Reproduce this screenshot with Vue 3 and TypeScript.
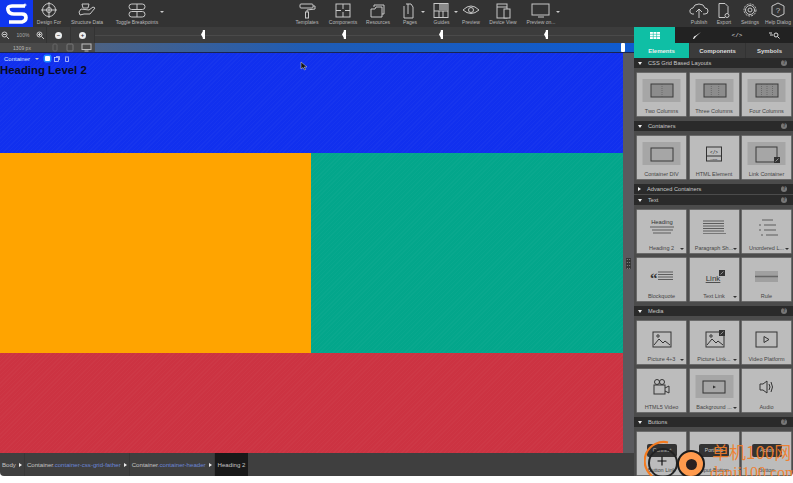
<script setup lang="ts">
interface ToolItem { label: string; width: number; icon: string; caret?: boolean }
interface Card { label: string; icon: string; back?: boolean; caret?: boolean }
interface Section { title: string; open: boolean; cards: Card[] }

const s = 'fill="none" stroke="#c8c8c8" stroke-width="1"'
const k = 'fill="none" stroke="#333" stroke-width="1"'

const leftTools: ToolItem[] = [
  { label: 'Design For', width: 32, icon: `<g ${s}><circle cx="12" cy="8" r="6.5"/><circle cx="12" cy="8" r="2.5"/><path d="M12 0v16M4 8h16"/></g>` },
  { label: 'Structure Data', width: 44, icon: `<g ${s}><path d="M7 2h7l-1 4H8zM6 7l8 1 4-3 2 1-5 6H9l-4 1-1-3z"/></g>` },
  { label: 'Toggle Breakpoints', width: 56, icon: `<g ${s}><rect x="4" y="2" width="16" height="5.5" rx="2.7"/><rect x="4" y="9.5" width="16" height="5.5" rx="2.7"/><path d="M12 2v5.500M12 9.500v5.500"/></g>` }
]
const midTools: ToolItem[] = [
  { label: 'Templates', width: 36, icon: `<g ${s}><rect x="5" y="2" width="13" height="4" rx="1"/><path d="M18 4h2v3l-8 1v2"/><rect x="10.500" y="10" width="3" height="6"/></g>` },
  { label: 'Components', width: 36, icon: `<g ${s}><rect x="5" y="2" width="14" height="13"/><path d="M12 2v5M12 10v5M5 8.500h5M14 8.500h5"/></g>` },
  { label: 'Resources', width: 34, icon: `<g ${s}><path d="M8 5V3h10v9h-2"/><path d="M5 7h4l1-2h6v10H5z"/></g>` },
  { label: 'Pages', width: 30, icon: `<g ${s}><path d="M8 2h5l2 3v11H6V4"/><path d="M10 2v10"/></g>`, caret: true },
  { label: 'Guides', width: 33, icon: `<g ${s}><rect x="4" y="1.500" width="14" height="14"/><path d="M4 9h14M9 9v6.500M13 9v6.500"/><rect x="9" y="2" width="9" height="6.500" fill="#8a8a8a" stroke="none"/></g>`, caret: true },
  { label: 'Preview', width: 26, icon: `<g ${s}><path d="M4 8q8-8 16 0q-8 7-16 0z"/><circle cx="12" cy="8" r="2.500"/></g>` },
  { label: 'Device View', width: 38, icon: `<g ${s}><rect x="6" y="2" width="10" height="14"/><path d="M6 5h10"/><rect x="13" y="7" width="6" height="9" fill="#333"/></g>` },
  { label: 'Preview on...', width: 38, icon: `<g ${s}><rect x="3" y="2" width="17" height="11"/><path d="M9 15h6"/></g>`, caret: true }
]
const rightTools: ToolItem[] = [
  { label: 'Publish', width: 26, icon: `<g ${s}><path d="M7 12H5q-3-1-2-4 1-2 3-2 1-4 6-4 5 0 6 4 3 0 3 3t-3 3h-2"/><path d="M12 16V8M9 10l3-3 3 3"/></g>` },
  { label: 'Export', width: 24, icon: `<g ${s}><path d="M7 1.500h6l3 3v7M13 15.500H7v-14"/><circle cx="15" cy="13.500" r="2"/></g>` },
  { label: 'Settings', width: 28, icon: `<g ${s}><circle cx="12" cy="8" r="6" stroke-dasharray="2 1"/><circle cx="12" cy="8" r="4.500"/><circle cx="12" cy="8" r="2"/></g>` },
  { label: 'Help Dialog', width: 28, icon: `<g ${s}><path d="M12 1l6 3v8l-6 3-6-3V4z"/></g><text x="12" y="11" font-size="8" text-anchor="middle" fill="#c8c8c8" font-family="Liberation Sans">?</text>` }
]

const sliderMarks = [201, 342, 439, 544]

const cols = (n: number) => {
  let lines = ''
  for (let i = 1; i < n; i++) {
    const x = 14 + (22 * i) / n
    lines += `<path d="M${x} 6v13" stroke="#555" stroke-width="0.6" stroke-dasharray="1 1"/>`
  }
  return `<rect x="14" y="6" width="22" height="13" fill="#8c8c8c" stroke="#3a3a3a" stroke-width="1"/>${lines}`
}
const textLines = (x: number, y: number, w: number, n: number, gap: number) => {
  let out = ''
  for (let i = 0; i < n; i++) out += `<path d="M${x} ${y + i * gap}h${w}" stroke="#444" stroke-width="0.8"/>`
  return out
}
const picture = `<g ${k}><rect x="16" y="6" width="18" height="15"/><path d="M17 19l5-6 4 4 2-2 5 4"/><circle cx="21" cy="10" r="1.200"/></g>`
const badge = (x: number, y: number) => `<rect x="${x}" y="${y}" width="6" height="6" fill="#333"/><path d="M${x + 1.5} ${y + 4.5}l3-3" stroke="#ccc" stroke-width="0.6"/>`

const sections: Section[] = [
  { title: 'CSS Grid Based Layouts', open: true, cards: [
    { label: 'Two Columns', back: true, icon: cols(2) },
    { label: 'Three Columns', back: true, icon: cols(3) },
    { label: 'Four Columns', back: true, icon: cols(4) }
  ] },
  { title: 'Containers', open: true, cards: [
    { label: 'Container DIV', back: true, icon: `<rect x="14" y="7" width="22" height="13" fill="none" stroke="#3a3a3a"/>` },
    { label: 'HTML Element', icon: `<g ${k}><rect x="16.500" y="6" width="15" height="14"/><path d="M16.500 15h15"/></g><text x="24" y="13" font-size="4.500" text-anchor="middle" fill="#222" font-family="Liberation Mono">&lt;/&gt;</text><text x="24" y="19" font-size="2.500" text-anchor="middle" fill="#222" font-family="Liberation Sans">HTML</text>` },
    { label: 'Link Container', back: true, icon: `<rect x="14" y="6" width="21" height="15" fill="none" stroke="#3a3a3a"/>${badge(32, 16)}` }
  ] },
  { title: 'Advanced Containers', open: false, cards: [] },
  { title: 'Text', open: true, cards: [
    { label: 'Heading 2', caret: true, icon: `<text x="25" y="9" font-size="5.800" text-anchor="middle" fill="#333" font-family="Liberation Sans">Heading</text><path d="M13 12h24M15 15h21M16 18h18" stroke="#444" stroke-width="0.8"/>` },
    { label: 'Paragraph Sh...', caret: true, icon: `${textLines(13, 6, 21, 5, 2.500)}<path d="M13 18.500h23" stroke="#777" stroke-width="1"/>` },
    { label: 'Unordered L...', caret: true, icon: `<path d="M20 5h11M22 10h12M22 15h12M24 20h12" stroke="#444" stroke-width="0.8"/><path d="M17 10h2M17 15h2M19 20h2" stroke="#444" stroke-width="0.8"/>` },
    { label: 'Blockquote', icon: `<text x="13" y="20" font-size="15" font-weight="bold" fill="#333" font-family="Liberation Serif">“</text>${textLines(21, 9, 15, 4, 2.500)}` },
    { label: 'Text Link', caret: true, icon: `<text x="23" y="18" font-size="8" text-anchor="middle" fill="#333" font-family="Liberation Sans" text-decoration="underline">Link</text>${badge(29, 7)}` },
    { label: 'Rule', icon: `<rect x="13" y="8" width="23" height="11" fill="#a0a0a0"/><path d="M13 13.500h23" stroke="#666" stroke-width="1.500"/>` }
  ] },
  { title: 'Media', open: true, cards: [
    { label: 'Picture 4÷3', caret: true, icon: picture },
    { label: 'Picture Link...', caret: true, icon: `${picture}${badge(29, 4)}` },
    { label: 'Video Platform', icon: `<rect x="14" y="6" width="21" height="15" fill="none" stroke="#333"/><path d="M22 10.500l5 3-5 3z" fill="none" stroke="#333"/>` },
    { label: 'HTML5 Video', icon: `<g ${k}><rect x="17" y="11" width="11" height="9"/><circle cx="20" cy="8" r="2.500"/><circle cx="25" cy="8" r="2.500"/><path d="M28 14l4-2v7l-4-2"/></g>` },
    { label: 'Background ...', caret: true, back: true, icon: `<rect x="13" y="7" width="22" height="12" fill="none" stroke="#333"/><path d="M23 11.500l3 1.500-3 1.500z" fill="#333"/>` },
    { label: 'Audio', icon: `<g ${k}><path d="M18 10h3l4-3v12l-4-3h-3z"/><path d="M27 10q2 3 0 6M29 8q3 5 0 10"/></g>` }
  ] },
  { title: 'Buttons', open: true, cards: [
    { label: 'Button Link', caret: true, icon: `<rect x="10" y="7" width="30" height="13" rx="2" fill="#333"/><text x="25" y="15" font-size="5" text-anchor="middle" fill="#ccc" font-family="Liberation Sans">Connect</text>` },
    { label: 'Input Button', icon: `<rect x="9" y="7" width="30" height="13" rx="2" fill="#333"/><text x="24" y="15" font-size="5" text-anchor="middle" fill="#ccc" font-family="Liberation Sans">Portfolio</text>` },
    { label: 'Button', icon: `<rect x="10" y="7" width="30" height="13" rx="2" fill="#333"/><text x="25" y="15" font-size="5" text-anchor="middle" fill="#ccc" font-family="Liberation Sans">Action</text>` }
  ] }
]

const crumbs = [
  { tag: 'Body', cls: '' },
  { tag: 'Container', cls: '.container-css-grid-father' },
  { tag: 'Container', cls: '.container-header' }
]
</script>

<template>
  <div class="window">
    <header class="toolbar">
      <div class="logo">
        <svg width="24" height="24" viewBox="0 0 24 24">
          <path d="M20 4H7Q2 4 3 8t6 4h8q4 0 4 3.500T17 20H4" fill="none" stroke="#fff" stroke-width="3.600" />
          <path d="M20 1.500v3M18.500 3h3" stroke="#fff" stroke-width="1" />
        </svg>
      </div>
      <div class="tool-group">
        <div v-for="t in leftTools" :key="t.label" class="tool" :style="{ width: t.width + 'px' }">
          <svg width="24" height="17" viewBox="0 0 24 17" v-html="t.icon"></svg>
          <span>{{ t.label }}</span>
        </div>
        <i class="caret bp-caret"></i>
      </div>
      <div class="tool-group mid">
        <div v-for="t in midTools" :key="t.label" class="tool" :style="{ width: t.width + 'px' }">
          <svg width="24" height="17" viewBox="0 0 24 17" v-html="t.icon"></svg>
          <span>{{ t.label }}</span>
          <i v-if="t.caret" class="caret tool-caret"></i>
        </div>
      </div>
      <div class="tool-group right">
        <div v-for="t in rightTools" :key="t.label" class="tool" :style="{ width: t.width + 'px' }">
          <svg width="24" height="17" viewBox="0 0 24 17" v-html="t.icon"></svg>
          <span>{{ t.label }}</span>
        </div>
      </div>
    </header>

    <div class="workspace">
      <main class="stage">
        <div class="zoom-row">
          <div class="zoom-box">
            <svg width="9" height="9" viewBox="0 0 9 9"><circle cx="3.500" cy="3.500" r="2.500" fill="none" stroke="#ccc" /><path d="M5.500 5.500L8 8M2 3.500h3" stroke="#ccc" /></svg>
            <span>100%</span>
            <svg width="9" height="9" viewBox="0 0 9 9"><circle cx="3.500" cy="3.500" r="2.500" fill="none" stroke="#ccc" /><path d="M5.500 5.500L8 8M2 3.500h3M3.500 2v3" stroke="#ccc" /></svg>
          </div>
          <div class="zoom-btn"><b class="round">–</b></div>
          <div class="zoom-btn"><b class="round">+</b></div>
          <div class="track">
            <i v-for="m in sliderMarks" :key="m" class="mark" :style="{ left: m - 95 + 'px' }"></i>
          </div>
        </div>
        <div class="ruler-row">
          <div class="ruler-left">
            <span class="px">1309 px</span>
            <svg width="8" height="9" viewBox="0 0 8 9"><rect x="2" y="1" width="4" height="7" rx="1" fill="none" stroke="#666" /></svg>
            <svg width="8" height="9" viewBox="0 0 8 9"><rect x="1" y="1" width="6" height="7" rx="1" fill="none" stroke="#777" /></svg>
            <svg width="11" height="9" viewBox="0 0 11 9"><rect x="1" y="1" width="9" height="5.500" fill="none" stroke="#bbb" /><path d="M3.500 8h4" stroke="#bbb" /></svg>
          </div>
          <div class="ruler-bar"><i class="ruler-handle"></i></div>
        </div>
        <div class="canvas-wrap">
          <div class="canvas">
            <section class="block blue">
              <div class="selector">
                <span>Container</span>
                <i class="caret sel-caret"></i>
                <i class="sel-on"></i>
                <svg width="6" height="6" viewBox="0 0 6 6"><rect x="0.500" y="1.500" width="4" height="4" fill="none" stroke="#dfe4ff" stroke-width="0.700" /><path d="M2 .5h3.500V4" fill="none" stroke="#dfe4ff" stroke-width="0.700" /></svg>
                <svg width="6" height="6" viewBox="0 0 6 6"><path d="M1 1h4M1.500 1.500v4h3v-4" fill="none" stroke="#dfe4ff" stroke-width="0.700" /></svg>
              </div>
              <h2>Heading Level 2</h2>
              <svg class="cursor" width="8" height="10" viewBox="0 0 8 10"><path d="M1 1v7l2-1.500L4.500 9l1-.5L4.300 6H7z" fill="#111" stroke="#ddd" stroke-width="0.500" /></svg>
            </section>
            <div class="split">
              <section class="block orange"></section>
              <section class="block teal"></section>
            </div>
            <section class="block red"></section>
          </div>
          <aside class="scroll"><div class="grip"></div></aside>
        </div>
        <footer class="crumbs">
          <div v-for="c in crumbs" :key="c.cls + c.tag" class="crumb">
            <span>{{ c.tag }}<em>{{ c.cls }}</em></span>
            <i class="tri"></i>
          </div>
          <div class="crumb current">Heading 2</div>
        </footer>
      </main>

      <aside class="panel">
        <div class="tabs">
          <div class="tab on">
            <svg width="10" height="7" viewBox="0 0 10 7"><path d="M0 0h10v7H0z" fill="#fff" /><path d="M3.300 0v7M6.600 0v7M0 2.300h10M0 4.600h10" stroke="#0fbfa5" stroke-width="0.600" /></svg>
          </div>
          <div class="tab brush">
            <svg width="10" height="9" viewBox="0 0 10 9"><path d="M9 1L4 5.500 2 8 1 8 2 5.500 4 4.500z" fill="#eee" /></svg>
          </div>
          <div class="tab code">&lt;/&gt;</div>
          <div class="tab find">
            <svg width="11" height="7" viewBox="0 0 11 7"><path d="M0 1h3M1 3h3" stroke="#ddd" /><circle cx="7" cy="3" r="2" fill="none" stroke="#ddd" /><path d="M8.500 4.500L10.500 6.500" stroke="#ddd" /></svg>
          </div>
        </div>
        <div class="subtabs">
          <div class="sub on">Elements</div>
          <div class="sub">Components</div>
          <div class="sub">Symbols</div>
        </div>
        <template v-for="sec in sections" :key="sec.title">
          <div class="sec-head" :class="{ closed: !sec.open }">
            <i :class="sec.open ? 'tri-down' : 'tri'"></i>
            <span>{{ sec.title }}</span>
            <b class="help">?</b>
          </div>
          <div v-if="sec.open" class="cards">
            <div v-for="c in sec.cards" :key="c.label" class="card">
              <svg class="card-art" width="49" height="26" viewBox="0 0 49 26">
                <rect v-if="c.back" x="5.500" y="1" width="38" height="23" fill="#a6a6a6" />
                <g v-html="c.icon"></g>
              </svg>
              <span class="card-label">{{ c.label }}</span>
              <i v-if="c.caret" class="caret card-caret"></i>
            </div>
          </div>
        </template>
      </aside>
    </div>

    <div class="watermark">
      <svg class="ring" width="36" height="43" viewBox="0 0 36 43">
        <circle cx="19" cy="23" r="14" fill="none" stroke="#222" stroke-width="2" />
        <path d="M24 2.500A19 19 0 0 0 8 36" fill="none" stroke="#f47b20" stroke-width="2.200" />
        <path d="M8 36q8 6 20 4" fill="none" stroke="#f47b20" stroke-width="1.500" />
        <path d="M18 16.500v9M13.500 21h9" stroke="#111" stroke-width="1.200" />
      </svg>
      <div class="disc"><i></i></div>
      <div class="wm-text">
        <span class="wm-cn">单机100网</span>
        <span class="wm-en">danji100.com</span>
      </div>
    </div>
  </div>
</template>

<style scoped>
.window {
  position: relative;
  width: 793px;
  height: 476px;
  display: flex;
  flex-direction: column;
  font-family: "Liberation Sans", Arial, sans-serif;
}

.toolbar {
  height: 27px;
  flex-shrink: 0;
  display: flex;
  background: #333;
}
.logo {
  width: 33px;
  height: 27px;
  background: #0f36ee;
  display: flex;
  align-items: center;
  justify-content: center;
}
.tool-group {
  position: relative;
  display: flex;
}
.tool-group.mid {
  margin-left: 124px;
}
.tool-group.right {
  margin-left: 126px;
}
.tool {
  position: relative;
  display: flex;
  flex-direction: column;
  align-items: center;
  padding-top: 2px;
  color: #b9b9b9;
  font-size: 5px;
  white-space: nowrap;
}
.tool svg {
  flex-shrink: 0;
}
.tool span {
  line-height: 6px;
}
.caret {
  display: block;
  width: 0;
  height: 0;
  border-left: 2px solid transparent;
  border-right: 2px solid transparent;
  border-top: 2px solid #ccc;
}
.bp-caret {
  position: absolute;
  left: 127px;
  top: 11px;
}
.tool-caret {
  position: absolute;
  right: 0;
  top: 11px;
}

.workspace {
  flex: 1;
  min-height: 0;
  display: flex;
}
.stage {
  width: 634px;
  display: flex;
  flex-direction: column;
}
.zoom-row {
  height: 16px;
  display: flex;
  background: #3c3c3c;
}
.zoom-box {
  width: 46px;
  display: flex;
  align-items: center;
  justify-content: space-between;
  padding: 0 1px;
  box-sizing: border-box;
  color: #aaa;
  font-size: 5px;
}
.zoom-btn {
  width: 24px;
  border-left: 1px solid #333;
  box-sizing: border-box;
  display: flex;
  align-items: center;
  justify-content: center;
}
.round {
  width: 7px;
  height: 7px;
  border-radius: 50%;
  background: #eee;
  color: #333;
  font-size: 6px;
  line-height: 7px;
  text-align: center;
}
.track {
  position: relative;
  flex: 1;
  border-left: 1px solid #333;
  background: linear-gradient(#4a4a4a, #4a4a4a) center / 100% 1px no-repeat;
}
.mark {
  position: absolute;
  top: 3px;
  width: 4px;
  height: 9px;
  background: #fff;
  clip-path: polygon(0 50%, 45% 15%, 45% 0, 100% 0, 100% 100%, 45% 100%, 45% 85%);
}
.ruler-row {
  height: 10px;
  display: flex;
  border-bottom: 1px solid #1a2350;
  box-sizing: border-box;
}
.ruler-left {
  width: 95px;
  display: flex;
  align-items: center;
  background: #4a4a4a;
  gap: 7px;
}
.px {
  width: 44px;
  text-align: center;
  color: #bbb;
  font-size: 5px;
}
.ruler-bar {
  position: relative;
  flex: 1;
  background: linear-gradient(90deg, #4c6284, #1f5cb5 40%, #0f5bd0);
}
.ruler-handle {
  position: absolute;
  left: 526px;
  top: 0;
  width: 4px;
  height: 9px;
  background: #fff;
  border-radius: 1px;
}
.canvas-wrap {
  height: 400px;
  display: flex;
}
.canvas {
  width: 623px;
  display: flex;
  flex-direction: column;
}
.block {
  position: relative;
  background-image: repeating-linear-gradient(135deg, rgba(255, 255, 255, 0.025) 0 1px, transparent 1px 3px);
}
.blue {
  height: 100px;
  background-color: #1130ee;
}
.split {
  height: 200px;
  display: flex;
}
.orange {
  width: 311px;
  background-color: #ffa400;
  background-image: none;
}
.teal {
  flex: 1;
  background-color: #03a68b;
}
.red {
  height: 100px;
  background-color: #cc3342;
}
.selector {
  height: 11px;
  padding-left: 4px;
  display: flex;
  align-items: center;
  color: #dfe4ff;
  font-size: 6px;
}
.sel-caret {
  margin: 0 0 0 5px;
}
.sel-on {
  width: 5px;
  height: 5px;
  margin: 0 4px 0 6px;
  background: #fff;
  border-radius: 1px;
  box-shadow: 0 0 0 1.500px #1e8dff;
}
.selector svg {
  margin-right: 4px;
}
h2 {
  margin: 0;
  color: #0a0a22;
  font-size: 11.400px;
  line-height: 12px;
  font-weight: 700;
}
.cursor {
  position: absolute;
  left: 300px;
  top: 8px;
}
.scroll {
  position: relative;
  flex: 1;
  background: #5a5a5e;
}
.grip {
  position: absolute;
  left: 0;
  top: 199px;
  width: 11px;
  height: 23px;
  box-sizing: border-box;
  padding: 6px 3px;
  background-color: #363636;
  background-image: radial-gradient(#999 0.6px, transparent 0.8px);
  background-size: 2.500px 3px;
  background-origin: content-box;
  background-clip: content-box;
}
.crumbs {
  flex: 1;
  display: flex;
  background: #3f3f3f;
  color: #c4c4c4;
  font-size: 6.100px;
  border-bottom-left-radius: 4px;
}
.crumb {
  display: flex;
  align-items: center;
  padding: 0 2px 0 2px;
  gap: 3px;
  border-right: 1px solid #383838;
  white-space: nowrap;
}
.crumb em {
  color: #6b86d6;
  font-style: normal;
}
.crumb.current {
  width: 33px;
  box-sizing: border-box;
  padding-left: 3px;
  background: #191919;
  border-right: 0;
}
.tri {
  display: block;
  width: 0;
  height: 0;
  border-top: 2px solid transparent;
  border-bottom: 2px solid transparent;
  border-left: 3px solid #eee;
}
.tri-down {
  display: block;
  width: 0;
  height: 0;
  border-left: 2px solid transparent;
  border-right: 2px solid transparent;
  border-top: 3px solid #eee;
}

.panel {
  width: 159px;
  overflow: hidden;
  background: #4b4b4b;
  border-bottom-right-radius: 4px;
}
.tabs {
  height: 16px;
  display: flex;
  background: #222;
}
.tab {
  display: flex;
  align-items: center;
  justify-content: center;
}
.tab.on {
  width: 41px;
  background: #0fbfa5;
}
.tab.brush {
  width: 44px;
}
.tab.code {
  width: 36px;
  color: #ddd;
  font-size: 6px;
  font-family: "Liberation Mono", monospace;
}
.tab.find {
  width: 38px;
}
.subtabs {
  height: 15px;
  display: flex;
  background: #3b3b3b;
  color: #ddd;
  font-size: 6px;
  font-weight: 700;
}
.sub {
  width: 56px;
  display: flex;
  align-items: center;
  justify-content: center;
  border-left: 1px solid #333;
  box-sizing: border-box;
}
.sub:last-child {
  width: 48px;
}
.sub.on {
  width: 55px;
  background: #0fbfa5;
  color: #eee;
  border-left: 0;
}
.sec-head {
  height: 10px;
  display: flex;
  align-items: center;
  padding: 0 6px 0 4px;
  gap: 6px;
  background: #2a2a2a;
  color: #c8c8c8;
  font-size: 5.700px;
}
.sec-head.closed {
  margin-bottom: 1px;
}
.sec-head span {
  flex: 1;
}
.help {
  width: 6px;
  height: 6px;
  border-radius: 50%;
  background: #777;
  color: #222;
  font-size: 4.500px;
  line-height: 6px;
  text-align: center;
}
.cards {
  display: grid;
  grid-template-columns: repeat(3, 49px);
  grid-auto-rows: 43px;
  gap: 5px 3.500px;
  padding: 5px 2px 5px 3px;
}
.card {
  position: relative;
  display: flex;
  flex-direction: column;
  align-items: center;
  background: #bcbcbc;
  box-shadow: 0 0 0 0.500px #8a8a8a;
  padding-top: 5px;
  box-sizing: border-box;
}
.card-label {
  position: absolute;
  left: 0;
  right: 0;
  bottom: 1px;
  text-align: center;
  color: #444;
  font-size: 5.500px;
  line-height: 7px;
  white-space: nowrap;
}
.card-caret {
  position: absolute;
  right: 2px;
  bottom: 3px;
  border-top-color: #333;
}

.watermark {
  position: absolute;
  left: 644px;
  top: 440px;
  width: 149px;
  height: 43px;
}
.ring {
  display: block;
}
.disc {
  position: absolute;
  left: 33px;
  top: 10px;
  width: 28px;
  height: 28px;
  box-sizing: border-box;
  border: 2px solid #1c1c1c;
  border-radius: 50%;
  background: #ff9a4d;
  display: flex;
  align-items: center;
  justify-content: center;
}
.disc i {
  width: 11px;
  height: 11px;
  border-radius: 50%;
  background: #2a2020;
}
.wm-text {
  position: absolute;
  left: 66px;
  top: 2px;
  display: flex;
  flex-direction: column;
  color: rgba(242, 125, 40, 0.92);
  white-space: nowrap;
}
.wm-cn {
  font-family: "Noto Sans CJK SC", sans-serif;
  font-size: 17px;
  line-height: 20px;
  margin-left: 2px;
}
.wm-en {
  font-family: "Liberation Serif", serif;
  font-size: 16px;
  line-height: 17px;
  margin-top: 2px;
}
</style>

<style>
body {
  background: #fff;
}
</style>
